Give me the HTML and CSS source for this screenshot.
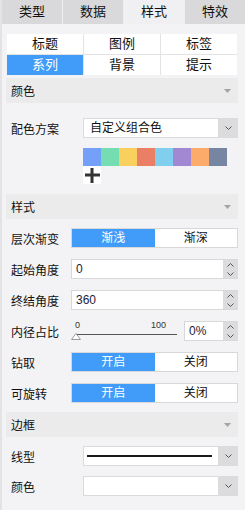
FILE: index.html
```html
<!DOCTYPE html>
<html lang="zh">
<head>
<meta charset="utf-8">
<link rel="stylesheet" href="styles.css">
</head>
<body>
<div class="panel">
  <div class="tabs">
    <div class="tab">类型</div>
    <div class="tab">数据</div>
    <div class="tab active">样式</div>
    <div class="tab">特效</div>
  </div>
  <div class="content">
    <div class="subtabs">
      <div class="st">标题</div>
      <div class="st">图例</div>
      <div class="st">标签</div>
      <div class="st on">系列</div>
      <div class="st">背景</div>
      <div class="st">提示</div>
    </div>

    <div class="sec-head first">
      <span>颜色</span>
      <svg class="caret" width="7" height="4" viewBox="0 0 7 4"><polygon points="0,0 7,0 3.5,4" fill="#a4a4a6"/></svg>
    </div>
    <div class="row wide r-scheme">
      <div class="lbl">配色方案</div>
      <div class="select">
        <span class="val">自定义组合色</span>
        <span class="drop"><svg width="7" height="4" viewBox="0 0 7 4"><polyline points="0.5,0.5 3.5,3.5 6.5,0.5" fill="none" stroke="#555" stroke-width="1"/></svg></span>
      </div>
    </div>
    <div class="palette">
      <span class="sw c1"></span><span class="sw c2"></span><span class="sw c3"></span><span class="sw c4"></span>
      <span class="sw c5"></span><span class="sw c6"></span><span class="sw c7"></span><span class="sw c8"></span>
    </div>
    <div class="add">
      <svg width="18" height="18" viewBox="0 0 18 18"><rect x="7.5" y="2" width="3" height="15" fill="#333"/><rect x="2" y="7.5" width="15" height="3" fill="#333"/></svg>
    </div>

    <div class="sec-head mid">
      <span>样式</span>
      <svg class="caret" width="7" height="4" viewBox="0 0 7 4"><polygon points="0,0 7,0 3.5,4" fill="#a4a4a6"/></svg>
    </div>
    <div class="row r-first">
      <div class="lbl">层次渐变</div>
      <div class="seg"><span class="on">渐浅</span><span>渐深</span></div>
    </div>
    <div class="row">
      <div class="lbl">起始角度</div>
      <div class="spin">
        <span class="val">0</span>
        <span class="arrows">
          <svg width="7" height="4" viewBox="0 0 7 4"><polyline points="0.5,3.5 3.5,0.5 6.5,3.5" fill="none" stroke="#555"/></svg>
          <svg width="7" height="4" viewBox="0 0 7 4"><polyline points="0.5,0.5 3.5,3.5 6.5,0.5" fill="none" stroke="#555"/></svg>
        </span>
      </div>
    </div>
    <div class="row">
      <div class="lbl">终结角度</div>
      <div class="spin">
        <span class="val">360</span>
        <span class="arrows">
          <svg width="7" height="4" viewBox="0 0 7 4"><polyline points="0.5,3.5 3.5,0.5 6.5,3.5" fill="none" stroke="#555"/></svg>
          <svg width="7" height="4" viewBox="0 0 7 4"><polyline points="0.5,0.5 3.5,3.5 6.5,0.5" fill="none" stroke="#555"/></svg>
        </span>
      </div>
    </div>
    <div class="row">
      <div class="lbl">内径占比</div>
      <div class="slider">
        <span class="tick t0">0</span>
        <span class="tick t100">100</span>
        <span class="track"></span>
        <svg class="thumb" width="10" height="7" viewBox="0 0 10 7"><polygon points="5,0.5 9.5,6.5 0.5,6.5" fill="#fff" stroke="#9a9a9a"/></svg>
      </div>
      <div class="spin small">
        <span class="val">0%</span>
        <span class="arrows">
          <svg width="7" height="4" viewBox="0 0 7 4"><polyline points="0.5,3.5 3.5,0.5 6.5,3.5" fill="none" stroke="#555"/></svg>
          <svg width="7" height="4" viewBox="0 0 7 4"><polyline points="0.5,0.5 3.5,3.5 6.5,0.5" fill="none" stroke="#555"/></svg>
        </span>
      </div>
    </div>
    <div class="row">
      <div class="lbl">钻取</div>
      <div class="seg"><span class="on">开启</span><span>关闭</span></div>
    </div>
    <div class="row">
      <div class="lbl">可旋转</div>
      <div class="seg"><span class="on">开启</span><span>关闭</span></div>
    </div>

    <div class="sec-head last">
      <span>边框</span>
      <svg class="caret" width="7" height="4" viewBox="0 0 7 4"><polygon points="0,0 7,0 3.5,4" fill="#a4a4a6"/></svg>
    </div>
    <div class="row wide r-first2">
      <div class="lbl">线型</div>
      <div class="select">
        <span class="line"></span>
        <span class="drop"><svg width="7" height="4" viewBox="0 0 7 4"><polyline points="0.5,0.5 3.5,3.5 6.5,0.5" fill="none" stroke="#555" stroke-width="1"/></svg></span>
      </div>
    </div>
    <div class="row wide r-color">
      <div class="lbl">颜色</div>
      <div class="select">
        <span class="val"></span>
        <span class="drop"><svg width="7" height="4" viewBox="0 0 7 4"><polyline points="0.5,0.5 3.5,3.5 6.5,0.5" fill="none" stroke="#555" stroke-width="1"/></svg></span>
      </div>
    </div>
  </div>
</div>
</body>
</html>
```
FILE: styles.css
```css
* { box-sizing: border-box; }
html, body {
  margin: 0;
  padding: 0;
  background: #f3f3f5;
}
body {
  font-family: "Liberation Sans", "Noto Sans CJK SC", sans-serif;
  font-size: 12px;
  color: #111;
}
.panel {
  width: 245px;
  min-height: 510px;
  border-left: 2px solid #e3e3e5;
}
.tabs {
  display: flex;
  gap: 1px;
  height: 24px;
  background: #eeeef0;
}
.tab {
  flex: 1;
  background: #d9d9db;
  text-align: center;
  line-height: 24px;
  font-size: 13px;
}
.tab.active {
  background: #f0f0f2;
}
.content {
  padding: 10px 7px 0 4px;
}
.subtabs {
  display: grid;
  grid-template-columns: repeat(3, 1fr);
  grid-auto-rows: 20px;
  gap: 1px;
  background: #e3e3e3;
  margin: 0 1px 0 1px;
}
.st {
  background: #fff;
  text-align: center;
  line-height: 20px;
  font-size: 13px;
}
.st.on {
  background: #409cf8;
  color: #fff;
}
.sec-head {
  display: flex;
  align-items: center;
  justify-content: space-between;
  height: 25px;
  background: #ebebec;
  padding: 0 7px 0 5px;
  font-size: 12px;
}
.sec-head.first { margin-top: 3px; }
.sec-head.mid { margin-top: 10px; }
.sec-head.last { margin-top: 9px; }
.row {
  display: flex;
  align-items: center;
  height: 20px;
  margin-top: 11px;
  padding-left: 5px;
}
.row .lbl {
  width: 60px;
  flex: none;
}
.row.wide .lbl { width: 72px; }
.r-scheme { margin-top: 15px; }
.r-first { margin-top: 9px; }
.r-first2 { margin-top: 9px; }
.r-color { margin-top: 10px; }
.select {
  flex: 1;
  height: 20px;
  display: flex;
  background: #fff;
  border: 1px solid #dadadc;
  border-right: none;
}
.select .val {
  flex: 1;
  padding-left: 6px;
  line-height: 18px;
  font-size: 12px;
}
.select .line {
  flex: 1;
  margin: 0 6px 0 3px;
  align-self: center;
  height: 2px;
  background: #1a1a1a;
}
.drop {
  width: 20px;
  background: #dcdcde;
  display: flex;
  align-items: center;
  justify-content: center;
}
.palette {
  display: flex;
  margin: 10px 0 0 77px;
  height: 18px;
}
.sw { width: 18px; height: 18px; }
.c1 { background: #74a0f9; }
.c2 { background: #74ddb2; }
.c3 { background: #f9d05d; }
.c4 { background: #eb7f66; }
.c5 { background: #81cfee; }
.c6 { background: #a287d3; }
.c7 { background: #fdab6a; }
.c8 { background: #7585a2; }
.add {
  margin-left: 77px;
  width: 18px;
  height: 18px;
  background: #fff;
}
.add svg { display: block; }
.seg {
  flex: 1;
  height: 20px;
  display: flex;
  border: 1px solid #d8d8da;
  background: #fff;
}
.seg span {
  flex: 1;
  text-align: center;
  line-height: 18px;
}
.seg span.on {
  background: #409cf8;
  color: #fff;
}
.spin {
  flex: 1;
  height: 20px;
  display: flex;
  background: #fff;
  border: 1px solid #d8d8da;
  border-right: none;
}
.spin .val {
  flex: 1;
  padding-left: 4px;
  line-height: 18px;
  font-size: 12px;
  color: #1c1c3a;
}
.arrows {
  width: 15px;
  background: #dcdcde;
  display: flex;
  flex-direction: column;
  align-items: center;
  justify-content: center;
  gap: 5px;
}
.arrows svg { display: block; }
.spin.small {
  flex: none;
  width: 54px;
  margin-left: 7px;
}
.slider {
  position: relative;
  width: 106px;
  height: 20px;
  flex: none;
}
.tick {
  position: absolute;
  top: 0;
  font-size: 9px;
  line-height: 9px;
  color: #333;
}
.t0 { left: 4px; }
.t100 { left: 80px; }
.track {
  position: absolute;
  left: 5px;
  right: 0;
  top: 13px;
  height: 1px;
  background: #555;
}
.thumb {
  position: absolute;
  left: 0;
  top: 12px;
}
```
